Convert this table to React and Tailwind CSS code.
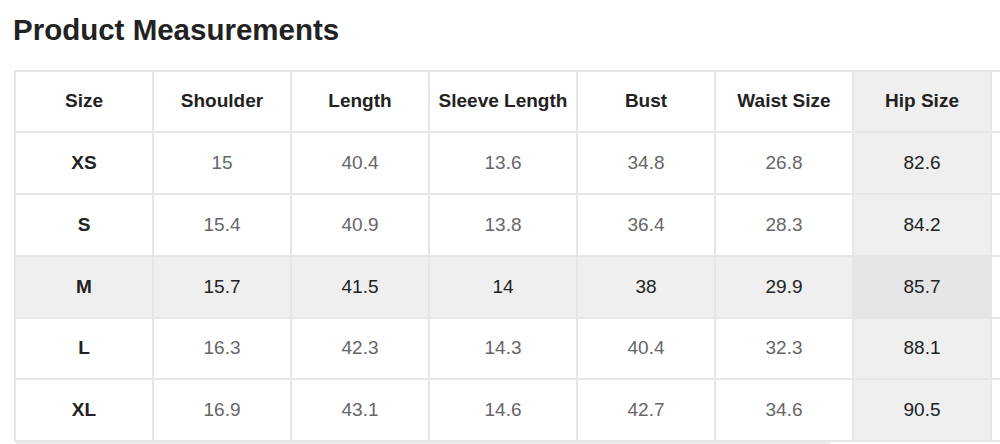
import React from "react";

const columns = [
  { key: "size", label: "Size", width: "w-[138px]" },
  { key: "shoulder", label: "Shoulder", width: "w-[138px]" },
  { key: "length", label: "Length", width: "w-[138px]" },
  { key: "sleeve", label: "Sleeve Length", width: "w-[148px]" },
  { key: "bust", label: "Bust", width: "w-[138px]" },
  { key: "waist", label: "Waist Size", width: "w-[138px]" },
  { key: "hip", label: "Hip Size", width: "w-[138px]" },
  // next column is scrolled out of view, only its left edge shows
  { key: "more", label: "", width: "w-[138px]" },
];

const rows = [
  { size: "XS", shoulder: "15", length: "40.4", sleeve: "13.6", bust: "34.8", waist: "26.8", hip: "82.6" },
  { size: "S", shoulder: "15.4", length: "40.9", sleeve: "13.8", bust: "36.4", waist: "28.3", hip: "84.2" },
  { size: "M", shoulder: "15.7", length: "41.5", sleeve: "14", bust: "38", waist: "29.9", hip: "85.7" },
  { size: "L", shoulder: "16.3", length: "42.3", sleeve: "14.3", bust: "40.4", waist: "32.3", hip: "88.1" },
  { size: "XL", shoulder: "16.9", length: "43.1", sleeve: "14.6", bust: "42.7", waist: "34.6", hip: "90.5" },
];

const activeRow = "M";
const activeCol = "hip";

const cellBg = (rowSize, colKey) => {
  if (colKey === "more") return "bg-white";
  const inRow = rowSize === activeRow;
  const inCol = colKey === activeCol;
  if (inRow && inCol) return "bg-[#e5e5e5]";
  if (inRow || inCol) return "bg-[#efefef]";
  return "bg-white";
};

const cellText = (rowSize, colKey) => {
  if (colKey === "size") return "font-bold text-[#222]";
  if (rowSize === activeRow || colKey === activeCol) return "text-[#222]";
  return "text-[#666]";
};

const App = () => {
  return (
    <div className="w-[1000px] h-[444px] overflow-hidden bg-white font-['Liberation_Sans',Arial,sans-serif]">
      <h1 className="pl-[13px] pt-[13px] text-[29.5px] leading-[34px] font-bold text-[#222]">
        Product Measurements
      </h1>
      <div className="mt-[23px] ml-[14px] overflow-hidden">
        <table className="border-separate border-spacing-0 border-l-2 border-t-2 border-[#e6e6e6] table-fixed w-[1116px]">
          <thead>
            <tr className="h-[61px]">
              {columns.map((col) => (
                <th
                  key={col.key}
                  className={`${col.width} border-r-2 border-b-2 border-[#e6e6e6] text-center align-middle text-[19px] font-bold text-[#222] ${col.key === activeCol ? "bg-[#efefef]" : "bg-white"}`}
                >
                  {col.label}
                </th>
              ))}
            </tr>
          </thead>
          <tbody>
            {rows.map((row) => (
              <tr key={row.size} className={row.size === "L" ? "h-[61px]" : "h-[62px]"}>
                {columns.map((col) => (
                  <td
                    key={col.key}
                    className={`border-r-2 border-b-2 border-[#e6e6e6] text-center align-middle text-[19px] ${cellBg(row.size, col.key)} ${cellText(row.size, col.key)}`}
                  >
                    {row[col.key] ?? ""}
                  </td>
                ))}
              </tr>
            ))}
          </tbody>
        </table>
        <div className="ml-[2px] w-[814px] h-[2px] bg-[#ececec]"></div>
      </div>
    </div>
  );
};

export default App;
